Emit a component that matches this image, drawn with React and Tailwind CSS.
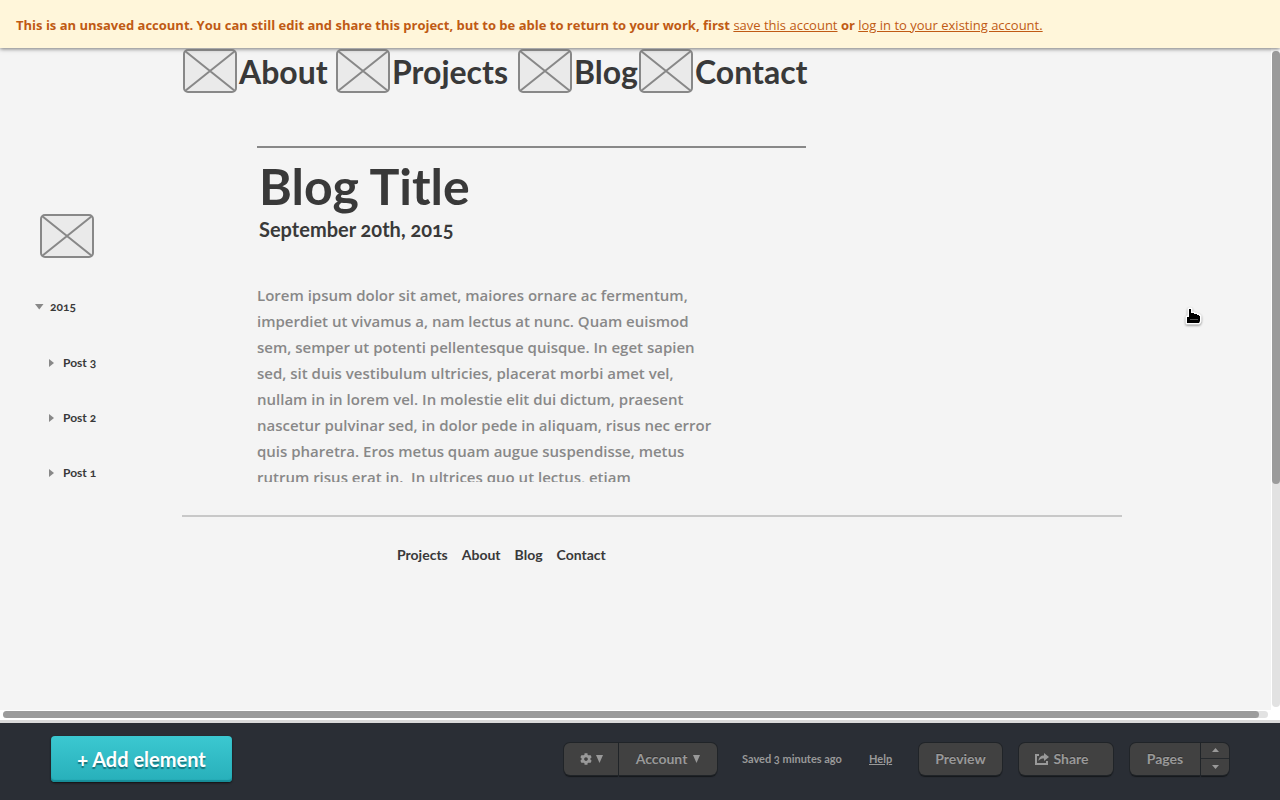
import React from "react";
import { FaCog } from "react-icons/fa";

function ImageBox() {
  return (
    <svg width="54" height="44" viewBox="0 0 54 44" className="shrink-0" aria-hidden="true">
      <rect x="1" y="1" width="52" height="42" rx="4" fill="#eaeaea" stroke="#888" strokeWidth="2" />
      <path d="M2 2L52 42M52 2L2 42" stroke="#888" strokeWidth="2" />
    </svg>
  );
}

function NavItem({ children }) {
  return (
    <a href="#" className="flex items-center gap-0.5 whitespace-nowrap">
      <ImageBox />
      <span className="pt-0.5">{children}</span>
    </a>
  );
}

function Post({ children }) {
  return (
    <li>
      <button type="button" className="flex h-5 items-center gap-2">
        <svg width="6" height="8" viewBox="0 0 6 8" aria-hidden="true">
          <path d="M0 0L5 4L0 8Z" fill="#888" />
        </svg>
        {children}
      </button>
    </li>
  );
}

const lines = [
  "Lorem ipsum dolor sit amet, maiores ornare ac fermentum,",
  "imperdiet ut vivamus a, nam lectus at nunc. Quam euismod",
  "sem, semper ut potenti pellentesque quisque. In eget sapien",
  "sed, sit duis vestibulum ultricies, placerat morbi amet vel,",
  "nullam in in lorem vel. In molestie elit dui dictum, praesent",
  "nascetur pulvinar sed, in dolor pede in aliquam, risus nec error",
  "quis pharetra. Eros metus quam augue suspendisse, metus",
  "rutrum risus erat in.\u00a0 In ultrices quo ut lectus, etiam",
];

const control =
  "flex h-8 items-center justify-center rounded-md bg-[#414141] text-[#999] shadow-[0_0_0_1px_#202428,0_2px_1px_#15181b] text-shadow-[0_-1px_0_#303030]";

function Down() {
  return (
    <svg width="7" height="8" viewBox="0 0 7 8" aria-hidden="true">
      <path d="M0 0H7L3.5 8Z" fill="#999" />
    </svg>
  );
}

export default function App() {
  return (
    <div className="relative flex h-screen min-h-[700px] flex-col overflow-hidden bg-[#f4f4f4] font-['Lato',sans-serif] text-[#393939] oldstyle-nums [font-variant-ligatures:none]">
      <div className="relative z-10 flex h-12 shrink-0 items-center bg-[#fff6da] px-4 pt-1 font-['Open_Sans',sans-serif] text-[13px] whitespace-nowrap text-[#c05a14] shadow-[0_1px_4px_#777]">
        <p>
          <strong>
            This is an unsaved account. You can still edit and share this project, but to be able to return to your work, first
          </strong>{" "}
          <a href="#" className="underline">save this account</a> <strong>or</strong>{" "}
          <a href="#" className="underline">log in to your existing account.</a>
        </p>
      </div>

      <div className="flex min-h-0 flex-1">
        <main className="min-w-0 flex-1 overflow-hidden pt-px">
          <nav className="ml-[183px] grid grid-cols-[153px_182px_121px_auto] text-[32px] leading-[42px] font-bold">
            <NavItem>About</NavItem>
            <NavItem>Projects</NavItem>
            <NavItem>Blog</NavItem>
            <NavItem>Contact</NavItem>
          </nav>
          <div className="flex pt-[53px]">
            <aside className="w-[257px] shrink-0 pt-[68px] pl-[35px] text-xs font-bold">
              <div className="pl-[5px]"><ImageBox /></div>
              <button type="button" className="mt-[39px] flex h-5 items-center gap-1.5">
                <svg width="9" height="6" viewBox="0 0 9 6" aria-hidden="true">
                  <path d="M0 0H8.500L4.250 5.500Z" fill="#888" />
                </svg>
                2015
              </button>
              <ul className="mt-9 flex flex-col gap-[35px] pl-3.5">
                <Post>Post 3</Post>
                <Post>Post 2</Post>
                <Post>Post 1</Post>
              </ul>
            </aside>
            <article className="min-w-0 flex-1">
              <hr className="w-[549px] border-0 border-t-2 border-[#888]" />
              <h1 className="mt-2 pl-0.5 text-[50px] leading-[61px] font-bold">Blog Title</h1>
              <p className="pl-0.5 text-xl leading-6 font-bold">September 20th, 2015</p>
              <div className="mt-[41px] h-[200px] overflow-hidden font-['Open_Sans',sans-serif] text-[15px] leading-[26px] font-semibold whitespace-nowrap text-[#888]">
                {lines.map((line) => (
                  <span key={line} className="block">{line}</span>
                ))}
              </div>
            </article>
          </div>
          <footer className="mr-[149px] ml-[182px] mt-8 border-t-2 border-[#c8c8c8]">
            <nav className="flex gap-3.5 pt-7 pl-[215px] text-sm font-bold">
              <a href="#">Projects</a>
              <a href="#">About</a>
              <a href="#">Blog</a>
              <a href="#">Contact</a>
            </nav>
          </footer>
        </main>
        <div className="w-[9px] shrink-0 bg-white pt-[3px] pb-[3px] pl-px">
          <div className="h-full rounded-full bg-[#e2e2e2]">
            <div className="h-[66%] rounded-full bg-[#9b9b9b]" />
          </div>
        </div>
      </div>

      <div className="h-[13px] shrink-0 border-b-[3px] border-[#dadada] bg-white pt-px pr-3 pl-[3px]">
        <div className="h-[7px] rounded-full bg-[#e2e2e2] pr-[9px]">
          <div className="h-full rounded-full bg-[#9b9b9b]" />
        </div>
      </div>

      <div className="flex h-[77px] shrink-0 items-center bg-[#2a2e35] pr-[51px] pb-1.5 pl-[51px] text-sm font-bold whitespace-nowrap text-[#999]">
        <button type="button" className="h-[46px] w-[181px] shrink-0 rounded bg-linear-to-b from-[#3bc8d1] to-[#27afba] text-xl text-white shadow-[inset_0_-2px_1px_#178d98,0_1px_2px_#111] text-shadow-[0_2px_1px_#16737b]">
          + Add element
        </button>
        <div className="ml-auto flex items-center">
          <div className="flex gap-px">
            <button type="button" aria-label="Settings" className={control + " w-[54px] gap-1 rounded-r-none"}>
              <FaCog size={12} />
              <Down />
            </button>
            <button type="button" className={control + " w-[98px] gap-1.5 rounded-l-none"}>
              Account
              <Down />
            </button>
          </div>
          <span className="ml-[25px] w-[102px] text-[11px]">Saved 3 minutes ago</span>
          <a href="#" className="ml-[25px] w-6 text-[11px] underline">Help</a>
          <button type="button" className={control + " ml-[26px] w-[83px]"}>Preview</button>
          <button type="button" className={control + " ml-[17px] w-[94px] gap-1 pr-2"}>
            <svg width="14" height="12" viewBox="0 0 14 12" aria-hidden="true">
              <path d="M4 2H1V11H12V8" fill="none" stroke="#999" strokeWidth="2" />
              <path d="M9 0L14 4L9 8V5.500C6.500 5.500 5 6 3.500 8C3.500 4.500 6 2.500 9 2.500Z" fill="#999" />
            </svg>
            Share
          </button>
          <div className="ml-[17px] flex gap-px">
            <button type="button" className={control + " w-[70px] rounded-r-none"}>Pages</button>
            <div className="flex h-8 w-7 flex-col gap-px overflow-hidden rounded-r-md bg-[#25292d] shadow-[0_0_0_1px_#202428,0_2px_1px_#15181b]">
              <button type="button" aria-label="Previous page" className="flex flex-1 items-center justify-center bg-[#414141]">
                <svg width="7" height="4" viewBox="0 0 7 4" aria-hidden="true"><path d="M0 4H7L3.500 0Z" fill="#999" /></svg>
              </button>
              <button type="button" aria-label="Next page" className="flex flex-1 items-center justify-center bg-[#414141]">
                <svg width="7" height="4" viewBox="0 0 7 4" aria-hidden="true"><path d="M0 0H7L3.500 4Z" fill="#999" /></svg>
              </button>
            </div>
          </div>
        </div>
      </div>

      <svg width="20" height="20" viewBox="0 0 20 20" className="pointer-events-none absolute top-[307px] left-[1184px] z-20 drop-shadow-[0_1px_1px_#888]" aria-hidden="true">
        <path d="M5 2H7V6H10V7H13V8H15V9H16V14L15 16H3V10H5Z" fill="#000" stroke="#fff" strokeWidth="3" strokeLinejoin="round" paintOrder="stroke" />
        <path d="M6 13L7 12L8 13L9 12L10 13L11 12L12 13L13 12L14 13" fill="none" stroke="#777" strokeWidth="0.700" />
      </svg>
    </div>
  );
}
